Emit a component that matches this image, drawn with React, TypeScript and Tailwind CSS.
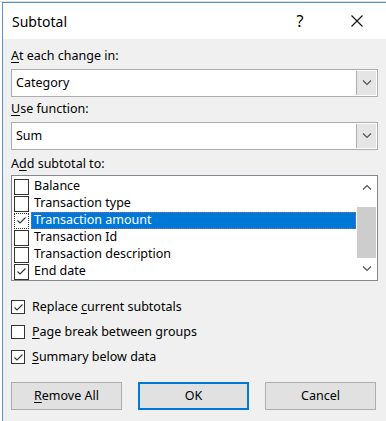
import React from "react";

const Check = ({ s = 11 }: { s?: number }) => (
  <svg width={s} height={s} viewBox="0 0 11 11" className="block">
    <path d="M1.5 5.5 L4 8 L9.5 2.5" fill="none" stroke="#333" strokeWidth="1.1" />
  </svg>
);

const Box = ({ checked, dotted, w = 13, h = 13 }: { checked?: boolean; dotted?: boolean; w?: number; h?: number }) => (
  <div
    className={
      "bg-white flex items-center justify-center shrink-0 " +
      (dotted ? "border border-dotted border-[#333]" : "border border-[#333]")
    }
    style={{ width: w, height: h }}
  >
    {checked ? <Check /> : null}
  </div>
);

const Chevron = ({ up }: { up?: boolean }) => (
  <svg width="10" height="6" viewBox="0 0 10 6" className="block">
    <path d={up ? "M1 5.5 L5 1.5 L9 5.5" : "M1 0.5 L5 4.5 L9 0.5"} fill="none" stroke="#555" strokeWidth="1.2" />
  </svg>
);

const Combo = ({ value }: { value: string }) => (
  <div className="h-[28px] border border-[#adadad] bg-white flex items-stretch">
    <div className="flex-1 flex items-center pl-[4px] text-[12.5px]">{value}</div>
    <div className="w-[20px] bg-[#e5e5e5] border-l border-[#adadad] flex items-center justify-center m-[1px] ml-0">
      <Chevron />
    </div>
  </div>
);

const U = ({ children }: { children: React.ReactNode }) => <span className="underline underline-offset-2">{children}</span>;

export default function App() {
  const items = [
    { t: "Balance", c: false },
    { t: "Transaction type", c: false },
    { t: "Transaction amount", c: true, sel: true },
    { t: "Transaction Id", c: false },
    { t: "Transaction description", c: false },
    { t: "End date", c: true },
  ];
  return (
    <div
      className="w-[386px] h-[421px] bg-white overflow-hidden text-[#000]"
      style={{ fontFamily: "'Noto Sans', 'Open Sans', sans-serif" }}
    >
      <div className="h-[2px] bg-white border-b border-[#dcdcdc]" />
      <div className="ml-[2px] h-[419px] border-l border-t border-[#5b8fd6] flex flex-col">
        <div className="h-[36px] bg-white flex items-center pl-[9px]">
          <div className="text-[14px] flex-1">Subtotal</div>
          <div className="text-[16px] w-[20px] mr-[41px] text-center">?</div>
          <svg width="12" height="12" viewBox="0 0 12 12" className="mr-[23px]">
            <path d="M0.5 0.5 L11.5 11.5 M11.5 0.5 L0.5 11.5" stroke="#111" strokeWidth="1.1" />
          </svg>
        </div>
        <div className="flex-1 bg-[#f0f0f0] px-[8px] pt-[7px] text-[12.5px]">
          <div className="h-[20px] leading-[20px]"><U>A</U>t each change in:</div>
          <div className="mt-[3px]"><Combo value="Category" /></div>
          <div className="h-[20px] leading-[20px] mt-[2px]"><U>U</U>se function:</div>
          <div className="mt-[3px]"><Combo value="Sum" /></div>
          <div className="h-[20px] leading-[20px] mt-[4px]">A<U>d</U>d subtotal to:</div>
          <div className="mt-[1px] h-[106px] border border-[#828790] bg-white flex">
            <div className="flex-1 pt-[2px] pl-[2px]">
              {items.map((it) => (
                <div key={it.t} className="h-[17px] flex items-center">
                  <div className="w-[17px] flex items-center">
                    <Box checked={it.c} dotted={it.sel} w={15} h={16} />
                  </div>
                  <div
                    className={
                      "h-[17px] flex items-center pl-[3px] flex-1 " +
                      (it.sel ? "bg-[#0078d7] text-white outline outline-1 outline-dotted outline-[#8a6aa0] -outline-offset-1" : "")
                    }
                  >
                    {it.t}
                  </div>
                </div>
              ))}
            </div>
            <div className="w-[19px] ml-[1px] mr-[1px] flex flex-col">
              <div className="h-[18px] flex items-center justify-center mt-[2px]"><Chevron up /></div>
              <div className="mt-[11px] h-[51px] bg-[#cdcdcd]" />
              <div className="flex-1 flex items-center justify-center"><Chevron /></div>
            </div>
          </div>
          <div className="mt-[19px] flex flex-col gap-[11px]">
            <div className="flex items-center gap-[7px] h-[14px]"><Box checked w={14} h={14} /><span>Replace <U>c</U>urrent subtotals</span></div>
            <div className="flex items-center gap-[7px] h-[14px]"><Box w={14} h={14} /><span><U>P</U>age break between groups</span></div>
            <div className="flex items-center gap-[7px] h-[14px]"><Box checked w={14} h={14} /><span><U>S</U>ummary below data</span></div>
          </div>
          <div className="mt-[18px] flex gap-[16px]">
            <div className="w-[111px] h-[28px] bg-[#e1e1e1] border border-[#adadad] flex items-center justify-center"><span><U>R</U>emove All</span></div>
            <div className="w-[111px] h-[28px] bg-[#e1e1e1] border-2 border-[#0078d7] flex items-center justify-center">OK</div>
            <div className="w-[111px] h-[28px] bg-[#e1e1e1] border border-[#adadad] flex items-center justify-center">Cancel</div>
          </div>
        </div>
      </div>
    </div>
  );
}
